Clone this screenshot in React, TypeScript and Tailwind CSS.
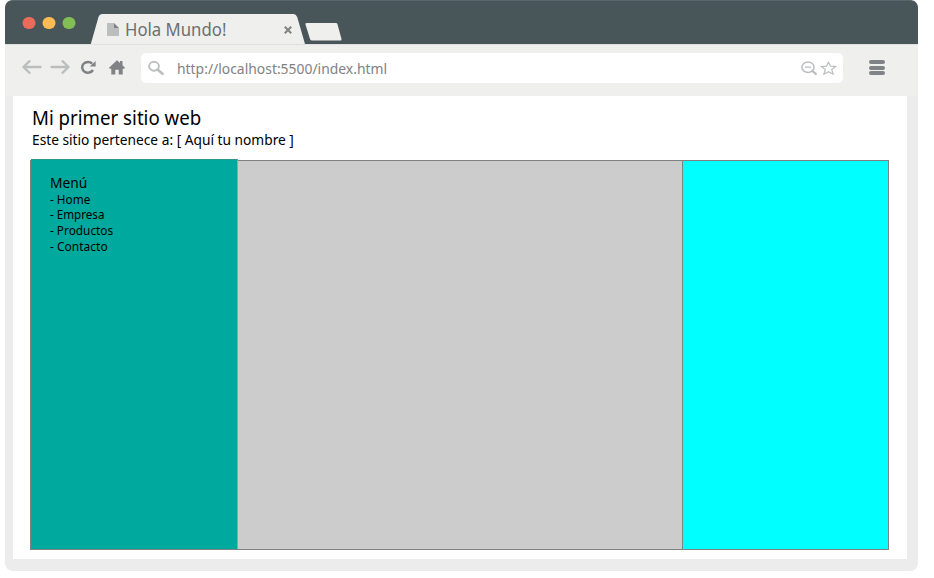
import React from "react";

const menuItems = [
  { label: "- Home", fit: "scale-x-[.94]" },
  { label: "- Empresa", fit: "scale-x-[.93]" },
  { label: "- Productos", fit: "scale-x-[.945]" },
  { label: "- Contacto", fit: "scale-x-[.96]" },
];

function TitleBar() {
  return (
    <header className="flex h-[44px] shrink-0 rounded-t-[7px] border-t border-[#56666a] bg-[#485659] pl-[17px]">
      <div className="mt-[16px] flex h-[12px] gap-[7px]">
        <span className="h-[12px] w-[13px] translate-x-[.5px] rounded-full bg-[#ea6b59]" />
        <span className="h-[12px] w-[13px] translate-x-[.5px] rounded-full bg-[#fdbc53]" />
        <span className="h-[12px] w-[13px] translate-x-[.5px] rounded-full bg-[#82bd55]" />
      </div>
      <div className="relative ml-[15px] mt-[13px] h-[30px] w-[215px]">
        <svg className="absolute inset-0" width="215" height="30" viewBox="0 0 215 30">
          <path d="M0.800 30 L8.500 3 Q9.500 0 12.500 0 H203.500 Q206 0 207.200 3 L215 30Z" fill="#efefed" />
        </svg>
        <div className="relative flex h-full items-center pl-[17px]">
          <svg width="12" height="13" viewBox="0 0 12 13">
            <path d="M0 0H7V5H12V13H0Z" fill="#bbbdbf" />
            <path d="M7 0L12 5H7Z" fill="#808285" />
          </svg>
          <span className="ml-[6px] w-[100px] origin-left scale-x-[.93] whitespace-nowrap text-[18px] leading-[24px] text-[#6d6e70]">Hola Mundo!</span>
          <svg className="ml-[58.500px] mt-px" width="8" height="8" viewBox="0 0 8 8">
            <path d="M.8 .8L7.200 7.200M7.200 .8L.8 7.200" stroke="#808285" strokeWidth="2" />
          </svg>
        </div>
      </div>
      <svg className="mt-[22px]" width="37" height="18" viewBox="0 0 37 18">
        <path d="M1.500 0H31Q32 0 32.400 1L36.500 16Q36.800 17.500 35.500 17.500H7Q5.500 17.500 5 16L.5 1.500Q0 0 1.500 0Z" fill="#efefed" />
      </svg>
    </header>
  );
}

function Toolbar() {
  return (
    <nav className="flex h-[52px] shrink-0 items-start border-t border-[#dfe1e0] bg-[#efefed] pl-[17px] pt-[8px]">
      <div className="-mt-px flex h-[30px] items-center">
        <svg width="20" height="14" viewBox="0 0 20 14" fill="none" stroke="#bbbdbf" strokeWidth="2.300" strokeLinecap="round" strokeLinejoin="round">
          <path d="M18.500 7H1.500M7.500 1.200L1.500 7L7.500 12.800" />
        </svg>
        <svg className="ml-[8px]" width="20" height="14" viewBox="0 0 20 14" fill="none" stroke="#bbbdbf" strokeWidth="2.300" strokeLinecap="round" strokeLinejoin="round">
          <path d="M1.500 7H18.500M12.500 1.200L18.500 7L12.500 12.800" />
        </svg>
        <svg className="ml-[10px]" width="16" height="14" viewBox="0 0 16 14">
          <path d="M12.200 3.600A5.800 5.400 0 1 0 13 10" fill="none" stroke="#808285" strokeWidth="2.500" />
          <path d="M15.600 1V6.400H9.800Z" fill="#808285" />
        </svg>
        <svg className="ml-[13px]" width="16" height="15" viewBox="0 0 16 15" fill="#808285">
          <path d="M8 .3L11 3V1H13.500V5.300L16 7.700L15.200 8.800H13.700V14.500H9.700V9.800H6.300V14.500H2.300V8.800H.8L0 7.700Z" />
        </svg>
      </div>
      <div className="ml-[16px] flex h-[30px] w-[702px] items-center rounded-[5px] bg-white pl-[7px] pr-[6px]">
        <svg width="16" height="14" viewBox="0 0 16 14" fill="none" stroke="#bbbdbf">
          <ellipse cx="6" cy="5.300" rx="4.900" ry="4.400" strokeWidth="1.900" />
          <path d="M9.500 8.500L14.500 12.800" strokeWidth="2.600" strokeLinecap="round" />
        </svg>
        <span className="ml-[13px] w-[210px] origin-left scale-x-[.926] whitespace-nowrap text-[15px] leading-[22px] text-[#808285]">http://localhost:5500/index.html</span>
        <div className="ml-auto flex items-center gap-[3px]">
          <svg width="16" height="14" viewBox="0 0 16 14" fill="none" stroke="#bbbdbf">
            <ellipse cx="7" cy="6.200" rx="6.100" ry="5.200" strokeWidth="1.500" />
            <path d="M4 6.200H10" strokeWidth="1.300" />
            <path d="M11.500 10L14.700 12.900" strokeWidth="2.300" strokeLinecap="round" />
          </svg>
          <svg width="17" height="14" viewBox="0 0 17 14">
            <path d="M8.500 1.300L10.500 5.200L15.600 5.500L11.700 8.500L13.100 13.200L8.500 10.700L3.900 13.200L5.300 8.500L1.400 5.500L6.500 5.200Z" fill="none" stroke="#bbbdbf" strokeWidth="1.200" />
          </svg>
        </div>
      </div>
      <div className="ml-[26px] mt-[7px] flex flex-col gap-[1.500px]">
        <span className="h-[4px] w-[16px] rounded-full bg-[#808285]" />
        <span className="h-[4px] w-[16px] rounded-full bg-[#808285]" />
        <span className="h-[4px] w-[16px] rounded-full bg-[#808285]" />
      </div>
    </nav>
  );
}

export default function App() {
  return (
    <div className="h-[578px] w-[934px] overflow-hidden bg-white pl-[5px] font-['Noto_Sans',sans-serif] text-black">
      <div className="flex h-[571px] w-[913px] flex-col overflow-hidden rounded-t-[7px] rounded-b-[8px] bg-[#ececec]">
        <TitleBar />
        <Toolbar />
        <main className="ml-[8px] flex h-[463px] w-[894px] flex-col bg-white pl-[17px] pt-[10px]">
          <h1 className="ml-[2px] w-fit origin-left scale-x-[.957] whitespace-nowrap text-[19.500px] leading-[24px]">Mi primer sitio web</h1>
          <p className="-mt-px ml-[2px] w-fit origin-left scale-x-[.947] whitespace-nowrap text-[14.500px] leading-[20px]">Este sitio pertenece a: [ Aquí tu nombre ]</p>
          <div className="mt-[11px] flex h-[390px] w-[859px] border border-[#808080] bg-[#cccccc]">
            <aside className="-mt-[2px] w-[207px] border-r border-t border-r-[#96a5a3] border-t-[#2d968f] bg-[#00a99d] pl-[19px] pt-[12px]">
              <h2 className="w-fit origin-left scale-x-[.95] text-[14.500px] leading-[20px]">Menú</h2>
              <ul className="-mt-[.5px]">
                {menuItems.map((item) => (
                  <li key={item.label} className="h-[15.800px] text-[12.500px] leading-[15.800px]">
                    <span className={`inline-block origin-left whitespace-nowrap ${item.fit}`}>{item.label}</span>
                  </li>
                ))}
              </ul>
            </aside>
            <section className="flex-1" />
            <aside className="w-[206px] border-l border-[#6f8888] bg-[#00ffff]" />
          </div>
        </main>
      </div>
    </div>
  );
}
